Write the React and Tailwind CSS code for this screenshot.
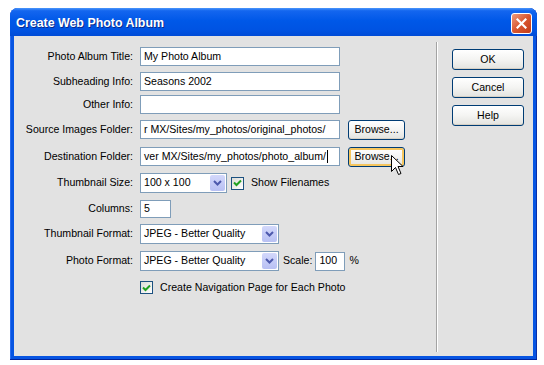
import React from 'react';

const ui = "font-['Liberation_Sans',Arial,sans-serif] text-[10.6px] text-black";

function TextBox({ value, width, caret }) {
  return (
    <div className={`h-[19px] ${width} bg-white border border-[#7f9db9] flex items-center px-[3px] overflow-hidden whitespace-nowrap`}>
      <span>{value}</span>
      {caret && <span className="ml-[1px] w-[1px] h-[13px] bg-black" />}
    </div>
  );
}

function Combo({ value, width }) {
  return (
    <div className={`h-[20px] ${width} bg-white border border-[#7f9db9] flex items-center pl-[3px] pr-[1px]`}>
      <span className="flex-1 whitespace-nowrap">{value}</span>
      <div className="w-[15px] h-[16px] rounded-[2px] bg-gradient-to-b from-[#d3d8fb] to-[#b8c0f3] flex items-center justify-center">
        <svg width="9" height="6" viewBox="0 0 9 6">
          <path d="M1 1 L4.5 4.5 L8 1" stroke="#4d59ad" strokeWidth="2" fill="none" />
        </svg>
      </div>
    </div>
  );
}

function CheckBox() {
  return (
    <div className="w-[13px] h-[13px] border border-[#1c5180] bg-gradient-to-br from-[#dcdcd7] to-white flex items-center justify-center">
      <svg width="9" height="8" viewBox="0 0 9 8">
        <path d="M1 3.5 L3.5 6 L8 1.5" stroke="#21a121" strokeWidth="2" fill="none" />
      </svg>
    </div>
  );
}

function XpButton({ children, width, height, hover }) {
  return (
    <div
      className={`${width} ${height} rounded-[3px] border border-[#003c74] flex items-center justify-center bg-gradient-to-b from-white via-[#f4f4f2] to-[#e3e3df] ${
        hover ? 'shadow-[inset_0_0_0_2px_#f6c65e]' : 'shadow-[inset_0_-1px_0_#d6d0c5]'
      }`}
    >
      {children}
    </div>
  );
}

// one label + control line of the form
function Row({ label, top, height, children }) {
  return (
    <div className={`flex items-center ${top} ${height}`}>
      <div className="w-[119px] text-right whitespace-nowrap">{label}</div>
      <div className="ml-[7px] flex items-center">{children}</div>
    </div>
  );
}

export default function App() {
  return (
    <div className={`relative w-[544px] h-[365px] bg-white pt-[8px] pl-[10px] ${ui}`}>
      <div className="w-[527px] h-[352px] flex flex-col rounded-t-[8px] bg-[#0755e2] shadow-[inset_0_-1px_0_#00239c,inset_-1px_0_0_#0a2fa8,inset_1px_0_0_#2a6df0]">
        {/* title bar */}
        <div className="h-[28px] flex items-center rounded-t-[8px] bg-[linear-gradient(to_bottom,#4a96fb_0%,#1466ef_10%,#0058e8_45%,#0053e2_80%,#004bd6_100%)] pl-[6px] pr-[5px]">
          <span className="flex-1 pt-[3px] text-white font-bold text-[12.4px] [text-shadow:1px_1px_0_#0a2a8c]">
            Create Web Photo Album
          </span>
          <div className="mt-[3px] w-[21px] h-[21px] rounded-[3px] border border-white bg-gradient-to-br from-[#ec9a7c] via-[#d9562f] to-[#c13b18] flex items-center justify-center">
            <svg width="11" height="11" viewBox="0 0 11 11">
              <path d="M1.5 1.5 L9.5 9.5 M9.5 1.5 L1.5 9.5" stroke="white" strokeWidth="2.2" strokeLinecap="square" />
            </svg>
          </div>
        </div>

        {/* dialog body */}
        <div className="flex-1 mx-[4px] mb-[4px] bg-[#e2e2e2] flex">
          <div className="w-[422px] flex flex-col">
            <Row label="Photo Album Title:" top="mt-[11px]" height="h-[19px]">
              <TextBox value="My Photo Album" width="w-[200px]" />
            </Row>
            <Row label="Subheading Info:" top="mt-[6px]" height="h-[19px]">
              <TextBox value="Seasons 2002" width="w-[200px]" />
            </Row>
            <Row label="Other Info:" top="mt-[4px]" height="h-[19px]">
              <TextBox value="" width="w-[200px]" />
            </Row>
            <Row label="Source Images Folder:" top="mt-[6px]" height="h-[19px]">
              <TextBox value="r MX/Sites/my_photos/original_photos/" width="w-[200px]" />
              <div className="ml-[8px]">
                <XpButton width="w-[57px]" height="h-[20px]">Browse...</XpButton>
              </div>
            </Row>
            <Row label="Destination Folder:" top="mt-[8px]" height="h-[19px]">
              <TextBox value="ver MX/Sites/my_photos/photo_album/" width="w-[200px]" caret />
              <div className="ml-[8px]">
                <XpButton width="w-[57px]" height="h-[20px]" hover>Browse...</XpButton>
              </div>
            </Row>
            <Row label="Thumbnail Size:" top="mt-[7px]" height="h-[20px]">
              <Combo value="100 x 100" width="w-[87px]" />
              <div className="ml-[4px]">
                <CheckBox />
              </div>
              <span className="ml-[7px]">Show Filenames</span>
            </Row>
            <Row label="Columns:" top="mt-[7px]" height="h-[18px]">
              <div className="h-[18px] w-[31px] bg-white border border-[#7f9db9] flex items-center px-[3px]">5</div>
            </Row>
            <Row label="Thumbnail Format:" top="mt-[6px]" height="h-[20px]">
              <Combo value="JPEG - Better Quality" width="w-[139px]" />
            </Row>
            <Row label="Photo Format:" top="mt-[7px]" height="h-[20px]">
              <Combo value="JPEG - Better Quality" width="w-[139px]" />
              <span className="ml-[4px]">Scale:</span>
              <div className="ml-[3px] h-[19px] w-[30px] bg-white border border-[#7f9db9] flex items-center px-[3px]">100</div>
              <span className="ml-[4px]">%</span>
            </Row>
            <Row label="" top="mt-[10px]" height="h-[13px]">
              <CheckBox />
              <span className="ml-[7px]">Create Navigation Page for Each Photo</span>
            </Row>
          </div>

          {/* separator */}
          <div className="mt-[6px] mb-[4px] w-[1px] bg-[#a3a3a3] border-r border-white box-content" />

          <div className="pl-[14px] pt-[13px] flex flex-col gap-[7px]">
            <XpButton width="w-[72px]" height="h-[21px]">OK</XpButton>
            <XpButton width="w-[72px]" height="h-[21px]">Cancel</XpButton>
            <XpButton width="w-[72px]" height="h-[21px]">Help</XpButton>
          </div>
        </div>
      </div>

      {/* mouse pointer over the hovered Browse button */}
      <svg className="absolute left-[391px] top-[155px]" width="13" height="21" viewBox="0 0 13 21">
        <path d="M0.5 0.5 L0.5 16.5 L4.5 12.5 L7.5 19.5 L10 18.5 L7 11.5 L12 11.5 Z" fill="white" stroke="black" strokeWidth="1" />
      </svg>
    </div>
  );
}
